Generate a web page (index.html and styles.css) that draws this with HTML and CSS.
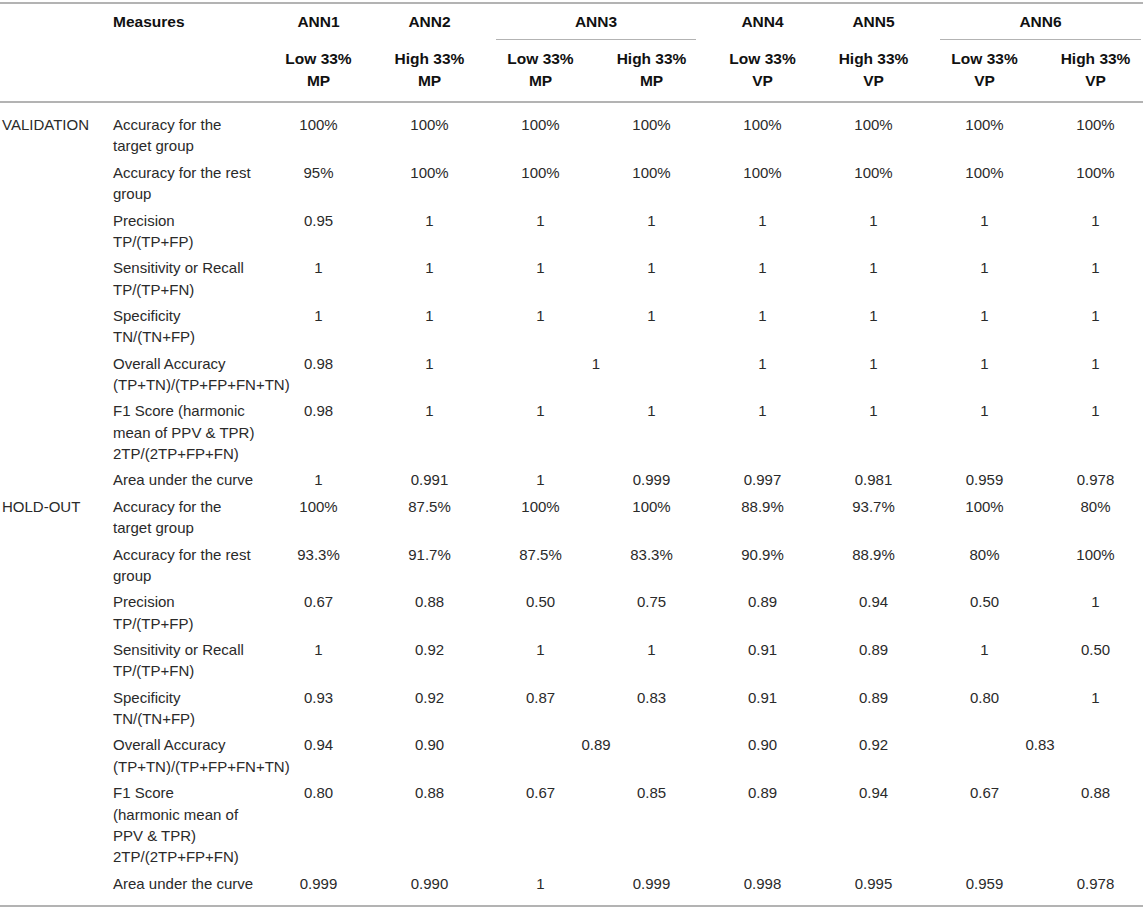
FILE: index.html
```html
<!DOCTYPE html>
<html lang="en">
<head>
<meta charset="utf-8">
<title>ANN measures</title>
<link rel="stylesheet" href="styles.css">
</head>
<body>
<table class="results">
  <colgroup>
    <col class="c-group">
    <col class="c-measure">
    <col class="c-data"><col class="c-data"><col class="c-data"><col class="c-data">
    <col class="c-data"><col class="c-data"><col class="c-data"><col class="c-last">
  </colgroup>
  <thead>
    <tr class="h1">
      <th class="first"><div class="hd"></div></th>
      <th class="measure"><div class="hd">Measures</div></th>
      <th><div class="hd">ANN1</div></th>
      <th><div class="hd">ANN2</div></th>
      <th colspan="2"><div class="hd span">ANN3</div></th>
      <th><div class="hd">ANN4</div></th>
      <th><div class="hd">ANN5</div></th>
      <th colspan="2" class="lastspan"><div class="hd span">ANN6</div></th>
    </tr>
    <tr class="h2">
      <th class="first"></th>
      <th class="measure"></th>
      <th>Low 33%<br>MP</th>
      <th>High 33%<br>MP</th>
      <th>Low 33%<br>MP</th>
      <th>High 33%<br>MP</th>
      <th>Low 33%<br>VP</th>
      <th>High 33%<br>VP</th>
      <th>Low 33%<br>VP</th>
      <th class="last">High 33%<br>VP</th>
    </tr>
  </thead>
  <tbody>
    <tr class="top">
      <td class="first">VALIDATION</td>
      <td class="measure">Accuracy for the<br>target group</td>
      <td>100%</td><td>100%</td><td>100%</td><td>100%</td><td>100%</td><td>100%</td><td>100%</td><td class="last">100%</td>
    </tr>
    <tr>
      <td class="first"></td>
      <td class="measure">Accuracy for the rest<br>group</td>
      <td>95%</td><td>100%</td><td>100%</td><td>100%</td><td>100%</td><td>100%</td><td>100%</td><td class="last">100%</td>
    </tr>
    <tr>
      <td class="first"></td>
      <td class="measure">Precision<br>TP/(TP+FP)</td>
      <td>0.95</td><td>1</td><td>1</td><td>1</td><td>1</td><td>1</td><td>1</td><td class="last">1</td>
    </tr>
    <tr>
      <td class="first"></td>
      <td class="measure">Sensitivity or Recall<br>TP/(TP+FN)</td>
      <td>1</td><td>1</td><td>1</td><td>1</td><td>1</td><td>1</td><td>1</td><td class="last">1</td>
    </tr>
    <tr>
      <td class="first"></td>
      <td class="measure">Specificity<br>TN/(TN+FP)</td>
      <td>1</td><td>1</td><td>1</td><td>1</td><td>1</td><td>1</td><td>1</td><td class="last">1</td>
    </tr>
    <tr>
      <td class="first"></td>
      <td class="measure">Overall Accuracy<br>(TP+TN)/(TP+FP+FN+TN)</td>
      <td>0.98</td><td>1</td><td colspan="2">1</td><td>1</td><td>1</td><td>1</td><td class="last">1</td>
    </tr>
    <tr>
      <td class="first"></td>
      <td class="measure">F1 Score (harmonic<br>mean of PPV &amp; TPR)<br>2TP/(2TP+FP+FN)</td>
      <td>0.98</td><td>1</td><td>1</td><td>1</td><td>1</td><td>1</td><td>1</td><td class="last">1</td>
    </tr>
    <tr>
      <td class="first"></td>
      <td class="measure">Area under the curve</td>
      <td>1</td><td>0.991</td><td>1</td><td>0.999</td><td>0.997</td><td>0.981</td><td>0.959</td><td class="last">0.978</td>
    </tr>
    <tr>
      <td class="first">HOLD-OUT</td>
      <td class="measure">Accuracy for the<br>target group</td>
      <td>100%</td><td>87.5%</td><td>100%</td><td>100%</td><td>88.9%</td><td>93.7%</td><td>100%</td><td class="last">80%</td>
    </tr>
    <tr>
      <td class="first"></td>
      <td class="measure">Accuracy for the rest<br>group</td>
      <td>93.3%</td><td>91.7%</td><td>87.5%</td><td>83.3%</td><td>90.9%</td><td>88.9%</td><td>80%</td><td class="last">100%</td>
    </tr>
    <tr>
      <td class="first"></td>
      <td class="measure">Precision<br>TP/(TP+FP)</td>
      <td>0.67</td><td>0.88</td><td>0.50</td><td>0.75</td><td>0.89</td><td>0.94</td><td>0.50</td><td class="last">1</td>
    </tr>
    <tr>
      <td class="first"></td>
      <td class="measure">Sensitivity or Recall<br>TP/(TP+FN)</td>
      <td>1</td><td>0.92</td><td>1</td><td>1</td><td>0.91</td><td>0.89</td><td>1</td><td class="last">0.50</td>
    </tr>
    <tr>
      <td class="first"></td>
      <td class="measure">Specificity<br>TN/(TN+FP)</td>
      <td>0.93</td><td>0.92</td><td>0.87</td><td>0.83</td><td>0.91</td><td>0.89</td><td>0.80</td><td class="last">1</td>
    </tr>
    <tr>
      <td class="first"></td>
      <td class="measure">Overall Accuracy<br>(TP+TN)/(TP+FP+FN+TN)</td>
      <td>0.94</td><td>0.90</td><td colspan="2">0.89</td><td>0.90</td><td>0.92</td><td colspan="2" class="last">0.83</td>
    </tr>
    <tr>
      <td class="first"></td>
      <td class="measure">F1 Score<br>(harmonic mean of<br>PPV &amp; TPR)<br>2TP/(2TP+FP+FN)</td>
      <td>0.80</td><td>0.88</td><td>0.67</td><td>0.85</td><td>0.89</td><td>0.94</td><td>0.67</td><td class="last">0.88</td>
    </tr>
    <tr class="bottom">
      <td class="first"></td>
      <td class="measure">Area under the curve</td>
      <td>0.999</td><td>0.990</td><td>1</td><td>0.999</td><td>0.998</td><td>0.995</td><td>0.959</td><td class="last">0.978</td>
    </tr>
  </tbody>
</table>
</body>
</html>
```

FILE: styles.css
```css
html, body {
  margin: 0;
  padding: 0;
  background: #ffffff;
}

body {
  font-family: "Liberation Sans", Arial, sans-serif;
  font-size: 15px;
  line-height: 21.36px;
  color: #2a2a2a;
}

.results {
  width: 1143px;
  margin-top: 2px;
  border-collapse: collapse;
  table-layout: fixed;
  border-top: 2px solid #b3b3b3;
  border-bottom: 2px solid #b3b3b3;
}

.c-group { width: 110px; }
.c-measure { width: 153px; }
.c-data { width: 111px; }
.c-last { width: 103px; }

.results th,
.results td {
  padding: 2.5px 0;
  text-align: center;
  vertical-align: top;
  white-space: nowrap;
  font-weight: normal;
}

.results th {
  font-weight: bold;
  font-size: 15.5px;
  color: #111111;
}

.results .first {
  text-align: left;
  padding-left: 2px;
}

.results .measure {
  text-align: left;
  padding-left: 3px;
}

.results .last,
.results .lastspan {
  padding-left: 8px;
}

.h1 th {
  padding: 7px 0 0;
}

.h1 th.first { padding-left: 2px; }
.h1 th.measure { padding-left: 3px; }
.h1 th.lastspan { padding-left: 0; }

.hd {
  min-height: 21.36px;
  padding-bottom: 7px;
}

.hd.span {
  border-bottom: 1px solid #b3b3b3;
  margin: 0 11px;
}

.lastspan .hd.span {
  margin: 0 2px 0 11px;
}

.h2 th {
  padding-top: 8px;
  padding-bottom: 10px;
  border-bottom: 2px solid #b3b3b3;
}

.top td {
  padding-top: 11px;
}

.bottom td {
  padding-bottom: 11px;
}
```
